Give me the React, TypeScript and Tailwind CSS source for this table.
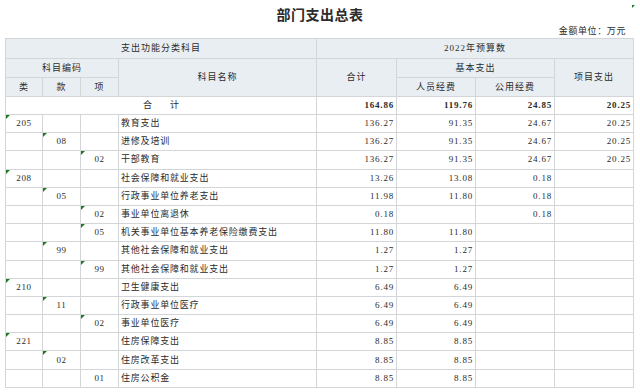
import React from "react";

type Row = {
    lei?: string; kuan?: string; xiang?: string; name: string;
    total: string; staff: string; pub: string; proj: string; noMark?: boolean;
};

const rows: Row[] = [
    { lei: "205", name: "教育支出", total: "136.27", staff: "91.35", pub: "24.67", proj: "20.25" },
    { kuan: "08", name: "进修及培训", total: "136.27", staff: "91.35", pub: "24.67", proj: "20.25" },
    { xiang: "02", name: "干部教育", total: "136.27", staff: "91.35", pub: "24.67", proj: "20.25" },
    { lei: "208", name: "社会保障和就业支出", total: "13.26", staff: "13.08", pub: "0.18", proj: "" },
    { kuan: "05", name: "行政事业单位养老支出", total: "11.98", staff: "11.80", pub: "0.18", proj: "" },
    { xiang: "02", name: "事业单位离退休", total: "0.18", staff: "", pub: "0.18", proj: "" },
    { xiang: "05", name: "机关事业单位基本养老保险缴费支出", total: "11.80", staff: "11.80", pub: "", proj: "" },
    { kuan: "99", name: "其他社会保障和就业支出", total: "1.27", staff: "1.27", pub: "", proj: "" },
    { xiang: "99", name: "其他社会保障和就业支出", total: "1.27", staff: "1.27", pub: "", proj: "" },
    { lei: "210", name: "卫生健康支出", total: "6.49", staff: "6.49", pub: "", proj: "" },
    { kuan: "11", name: "行政事业单位医疗", total: "6.49", staff: "6.49", pub: "", proj: "" },
    { xiang: "02", name: "事业单位医疗", total: "6.49", staff: "6.49", pub: "", proj: "" },
    { lei: "221", name: "住房保障支出", total: "8.85", staff: "8.85", pub: "", proj: "" },
    { kuan: "02", name: "住房改革支出", total: "8.85", staff: "8.85", pub: "", proj: "" },
    { xiang: "01", name: "住房公积金", total: "8.85", staff: "8.85", pub: "", proj: "", noMark: true },
];

const Mark = () => (
    <span className="absolute left-0 top-0 w-0 h-0 border-t-[4px] border-t-[#1f7a1f] border-r-[4px] border-r-transparent" />
);

const CodeCell = ({ code, mark }: { code?: string; mark: boolean }) => (
    <td className="relative border border-[#d3d6d9] text-center p-0 tracking-[0.6px]">
        {code && mark && <Mark />}
        {code}
    </td>
);

const th = "border border-[#d3d6d9] bg-[#e9eef3] font-normal p-0 tracking-[1px]";
const num = "border border-[#d3d6d9] text-right pr-[2px] tracking-[0.8px]";

export default function App() {
    return (
        <div className="w-[640px] h-[392px] bg-white text-[#2b2b2b] relative" style={{ fontFamily: '"Liberation Serif", "Noto Sans CJK SC", serif' }}>
            <span className="absolute right-[5px] top-[5px] w-0 h-0 border-t-[3px] border-t-[#1f7a1f] border-r-[3px] border-r-transparent" />
            <div className="h-[25px] flex items-start justify-center pt-[7px]">
                <h1 className="text-[14px] font-bold tracking-[0.5px] leading-none" style={{ fontFamily: '"Noto Sans CJK SC", sans-serif' }}>部门支出总表</h1>
            </div>
            <div className="h-[13px] flex items-center justify-end pr-[14px] text-[9px] tracking-[0.6px] leading-none">金额单位：万元</div>
            <div className="px-[5px]">
                <table className="w-[628px] border-collapse table-fixed text-[9px] leading-none">
                    <colgroup>
                        <col className="w-[37px]" />
                        <col className="w-[38px]" />
                        <col className="w-[38px]" />
                        <col className="w-[198px]" />
                        <col className="w-[80px]" />
                        <col className="w-[79px]" />
                        <col className="w-[79px]" />
                        <col className="w-[79px]" />
                    </colgroup>
                    <thead>
                        <tr className="h-[20px]">
                            <th colSpan={4} className={th}>支出功能分类科目</th>
                            <th colSpan={4} className={th}>2022年预算数</th>
                        </tr>
                        <tr className="h-[19px]">
                            <th colSpan={3} className={th}>科目编码</th>
                            <th rowSpan={2} className={th}>科目名称</th>
                            <th rowSpan={2} className={th}>合计</th>
                            <th colSpan={2} className={th}>基本支出</th>
                            <th rowSpan={2} className={th}>项目支出</th>
                        </tr>
                        <tr className="h-[19px]">
                            <th className={th}>类</th>
                            <th className={th}>款</th>
                            <th className={th}>项</th>
                            <th className={th}>人员经费</th>
                            <th className={th}>公用经费</th>
                        </tr>
                    </thead>
                    <tbody>
                        <tr className="h-[18px]">
                            <td colSpan={4} className="border border-[#d3d6d9] text-center whitespace-pre">合        计</td>
                            <td className={num + " font-bold"}>164.86</td>
                            <td className={num + " font-bold"}>119.76</td>
                            <td className={num + " font-bold"}>24.85</td>
                            <td className={num + " font-bold"}>20.25</td>
                        </tr>
                        {rows.map((r, i) => (
                            <tr key={i} className="h-[18.2px]">
                                <CodeCell code={r.lei} mark={!r.noMark} />
                                <CodeCell code={r.kuan} mark={!r.noMark} />
                                <CodeCell code={r.xiang} mark={!r.noMark} />
                                <td className="border border-[#d3d6d9] text-left pl-[2px] tracking-[0.8px]">{r.name}</td>
                                <td className={num}>{r.total}</td>
                                <td className={num}>{r.staff}</td>
                                <td className={num}>{r.pub}</td>
                                <td className={num}>{r.proj}</td>
                            </tr>
                        ))}
                    </tbody>
                </table>
            </div>
        </div>
    );
}
